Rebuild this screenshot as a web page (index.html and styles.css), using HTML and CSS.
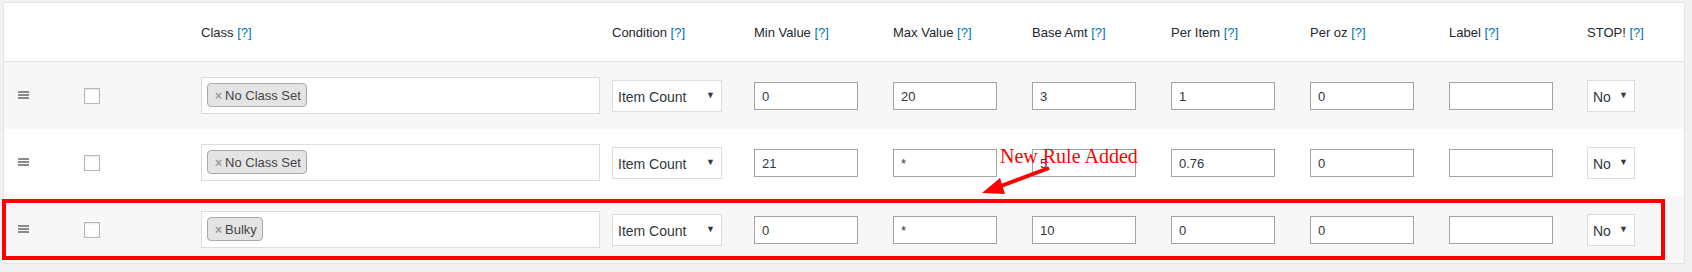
FILE: index.html
```html
<!DOCTYPE html>
<html lang="en">
<head>
<meta charset="UTF-8" />
<meta name="viewport" content="width=device-width, initial-scale=1" />
<title>Table Rate Rules</title>
<link rel="stylesheet" href="styles.css">
</head>
<body>

<div class="wrap">
  <table class="rules">
    <thead>
      <tr>
        <th class="c-sort"></th>
        <th class="c-check"></th>
        <th class="c-class">Class <a href="#">[?]</a></th>
        <th class="c-cond">Condition <a href="#">[?]</a></th>
        <th class="c-num">Min Value <a href="#">[?]</a></th>
        <th class="c-num">Max Value <a href="#">[?]</a></th>
        <th class="c-num">Base Amt <a href="#">[?]</a></th>
        <th class="c-num">Per Item <a href="#">[?]</a></th>
        <th class="c-num">Per oz <a href="#">[?]</a></th>
        <th class="c-label">Label <a href="#">[?]</a></th>
        <th class="c-stop">STOP! <a href="#">[?]</a></th>
      </tr>
    </thead>
    <tbody>
      <tr class="alt">
        <td class="sort"><span class="handle"><i></i><i></i><i></i></span></td>
        <td><input type="checkbox" class="check"></td>
        <td><div class="classes"><span class="tag"><b>×</b>No Class Set</span></div></td>
        <td><div class="select cond"><select><option>Item Count</option></select></div></td>
        <td><input type="text" class="num" value="0"></td>
        <td><input type="text" class="num" value="20"></td>
        <td><input type="text" class="num" value="3"></td>
        <td><input type="text" class="num" value="1"></td>
        <td><input type="text" class="num" value="0"></td>
        <td><input type="text" class="num" value=""></td>
        <td><div class="select stop"><select><option>No</option></select></div></td>
      </tr>
      <tr>
        <td class="sort"><span class="handle"><i></i><i></i><i></i></span></td>
        <td><input type="checkbox" class="check"></td>
        <td><div class="classes"><span class="tag"><b>×</b>No Class Set</span></div></td>
        <td><div class="select cond"><select><option>Item Count</option></select></div></td>
        <td><input type="text" class="num" value="21"></td>
        <td><input type="text" class="num" value="*"></td>
        <td><input type="text" class="num" value="5"></td>
        <td><input type="text" class="num" value="0.76"></td>
        <td><input type="text" class="num" value="0"></td>
        <td><input type="text" class="num" value=""></td>
        <td><div class="select stop"><select><option>No</option></select></div></td>
      </tr>
      <tr class="alt">
        <td class="sort"><span class="handle"><i></i><i></i><i></i></span></td>
        <td><input type="checkbox" class="check"></td>
        <td><div class="classes"><span class="tag"><b>×</b>Bulky</span></div></td>
        <td><div class="select cond"><select><option>Item Count</option></select></div></td>
        <td><input type="text" class="num" value="0"></td>
        <td><input type="text" class="num" value="*"></td>
        <td><input type="text" class="num" value="10"></td>
        <td><input type="text" class="num" value="0"></td>
        <td><input type="text" class="num" value="0"></td>
        <td><input type="text" class="num" value=""></td>
        <td><div class="select stop"><select><option>No</option></select></div></td>
      </tr>
    </tbody>
  </table>

  <!-- annotation drawn over the screenshot -->
  <div class="highlight"></div>
  <div class="note">New Rule Added</div>
  <svg class="arrow" width="90" height="40" viewBox="0 0 90 40">
    <line x1="79" y1="8" x2="31" y2="26" stroke="#ff0000" stroke-width="4" />
    <polygon points="12,33 30,18 35,34" fill="#ff0000" />
  </svg>
</div>

</body>
</html>
```

FILE: styles.css
```css
* {
  box-sizing: border-box;
}
body {
  margin: 0;
  padding: 2px 7px 0 3px;
  background: #f1f1f1;
  color: #23282d;
  font-family: "Liberation Sans", Arial, sans-serif;
  font-size: 13px;
}
.wrap {
  position: relative;
}
.rules {
  width: 1682px;
  table-layout: fixed;
  border-collapse: separate;
  border-spacing: 0;
  background: #fff;
  border: 1px solid #e5e5e5;
  box-shadow: 0 1px 1px rgba(0, 0, 0, 0.04);
}
.rules th {
  height: 59px;
  padding: 0;
  text-align: left;
  font-weight: normal;
  font-size: 13px;
  color: #23282d;
  border-bottom: 1px solid #e1e1e1;
  vertical-align: middle;
}
.rules th a {
  color: #0073aa;
  text-decoration: none;
}
.c-sort { width: 80px; }
.c-check { width: 117px; }
.c-class { width: 411px; }
.c-cond { width: 142px; }
.c-num { width: 139px; }
.c-label { width: 138px; }
.c-stop { width: 97px; }

.rules td {
  height: 67px;
  padding: 0;
  vertical-align: middle;
}
.rules tr.alt td {
  background: #f7f7f7;
}
.rules td.sort {
  padding-left: 14px;
}
/* poignée de tri */
.handle {
  display: flex;
  flex-direction: column;
  gap: 1px;
  width: 11px;
  margin-top: -1px;
}
.handle i {
  display: block;
  height: 2px;
  background: #8a8a8a;
}
.check {
  appearance: none;
  -webkit-appearance: none;
  display: block;
  margin: 1px 0 0;
  width: 16px;
  height: 16px;
  border: 1px solid #b4b9be;
  background: #fff;
  box-shadow: inset 0 1px 2px rgba(0, 0, 0, 0.1);
}
.classes {
  width: 399px;
  height: 37px;
  border: 1px solid #ddd;
  background: #fff;
  padding: 5px;
  display: flex;
  align-items: flex-start;
}
.tag {
  display: inline-flex;
  align-items: center;
  height: 24px;
  padding: 1px 5px 0 7px;
  background: #e4e4e4;
  border: 1px solid #aaa;
  border-radius: 4px;
  color: #444;
  font-size: 13px;
}
.tag b {
  color: #999;
  font-size: 12px;
  margin-right: 3px;
}
.select {
  position: relative;
  height: 32px;
}
.select select {
  appearance: none;
  -webkit-appearance: none;
  width: 100%;
  height: 100%;
  margin: 0;
  padding: 2px 0 0 5px;
  border: 1px solid #ddd;
  border-radius: 0;
  background: #fff;
  color: #32373c;
  font-family: inherit;
  font-size: 14px;
}
.select::after {
  content: "▼";
  position: absolute;
  right: 7px;
  top: 10px;
  font-size: 9px;
  color: #32373c;
  pointer-events: none;
}
.cond {
  width: 110px;
}
.stop {
  width: 48px;
}
.num {
  display: block;
  width: 104px;
  height: 28px;
  margin: 0;
  padding: 2px 7px 0;
  border: 1px solid #a3a3a3;
  background: #fff;
  color: #32373c;
  font-family: inherit;
  font-size: 13px;
}

/* annotation */
.highlight {
  position: absolute;
  left: -1px;
  top: 197px;
  width: 1663px;
  height: 61px;
  border: 4px solid #ff0000;
  pointer-events: none;
}
.note {
  position: absolute;
  left: 997px;
  top: 144px;
  font-family: "Liberation Serif", "Times New Roman", serif;
  font-size: 20px;
  line-height: 20px;
  color: #ff0000;
  white-space: nowrap;
}
.arrow {
  position: absolute;
  left: 967px;
  top: 158px;
}
```
